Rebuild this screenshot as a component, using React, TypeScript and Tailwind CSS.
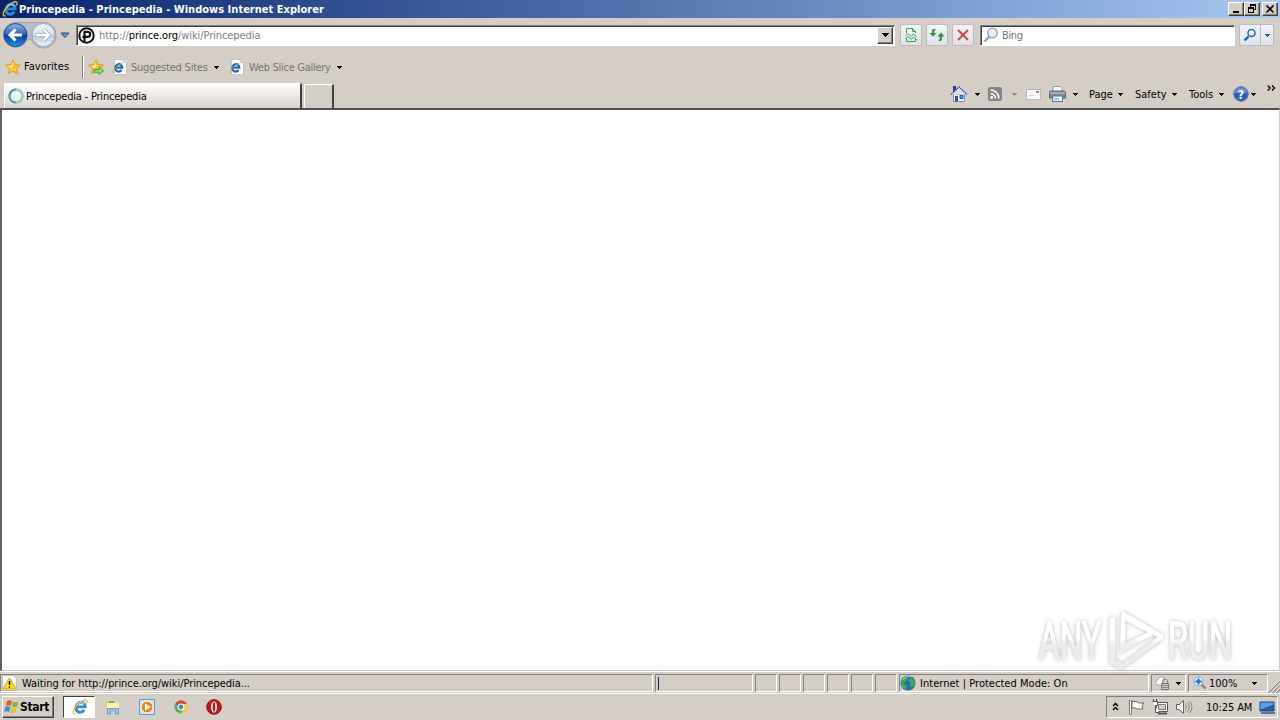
import React from 'react';

const Caret = ({ className = 'text-black' }: { className?: string }) => (
  <svg className={`shrink-0 ${className}`} width="5" height="3" viewBox="0 0 5 3" shapeRendering="crispEdges">
    <path d="M0 0h5v1H0zM1 1h3v1H1zM2 2h1v1H2z" fill="currentColor" />
  </svg>
);

const IeLogo = ({ size = 16 }: { size?: number }) => (
  <svg className="shrink-0" width={size} height={size} viewBox="0 0 16 16">
    <path d="M12.300 10.800A4.500 5.200 25 1 1 13.200 7.900H5.200" fill="none" stroke="#2a8ee0" strokeWidth="2.900" />
    <path d="M5 5.500a4.700 4.700 0 0 1 7.500-.3" fill="none" stroke="#8fdcfb" strokeWidth="1.200" />
    <path d="M3.600 14.600C0 16 .4 11.500 4.200 7 8 2.400 13.400-.4 14.800 1.300c.7.9.3 2-.3 3" fill="none" stroke="#f2c02c" strokeWidth="1.300" />
  </svg>
);

const PageIe = () => (
  <svg className="shrink-0" width="16" height="16" viewBox="0 0 16 16">
    <path d="M2.500.5h9l3 3v12h-12z" fill="#fff" stroke="#c3c3c3" />
    <path d="M11.500.5v3h3" fill="#e8e8e8" stroke="#c3c3c3" />
    <path d="M9.500 11A3.400 3.800 25 1 1 10.300 8.700H3.500" fill="none" stroke="#1769c5" strokeWidth="2.200" />
    <path d="M2 13.500C-1 14 3.500 6.500 10.500 4.500" fill="none" stroke="#d9a520" strokeWidth="1" />
  </svg>
);

const Star = ({ arrow = false }: { arrow?: boolean }) => (
  <svg className="shrink-0" width="16" height="16" viewBox="0 0 16 16">
    <path d="M8 .8l2.100 4.800 5.200.5-3.900 3.500 1.100 5.200L8 12.200l-4.500 2.600 1.100-5.200L.7 6.100l5.200-.5z" fill="#fdc531" stroke="#df9a22" />
    <path d="M8 2.800L6.600 6.400 3 6.900l2.600 2L8 7.500z" fill="#fff0a5" />
    {arrow && <path d="M6 10.500h5V8l4.500 3.900-4.500 3.700v-2.400H6z" fill="#8be37a" stroke="#3aa535" />}
  </svg>
);

const BackForward = () => (
  <svg className="shrink-0" width="56" height="28" viewBox="0 0 56 28">
    <defs>
      <linearGradient id="back" x1="0" y1="0" x2="0" y2="1">
        <stop offset="0" stopColor="#93b5e5" />
        <stop offset=".48" stopColor="#2b62b9" />
        <stop offset=".5" stopColor="#073a91" />
        <stop offset="1" stopColor="#2496e8" />
      </linearGradient>
      <linearGradient id="forward" x1="0" y1="0" x2="0" y2="1">
        <stop offset="0" stopColor="#f5f7fa" />
        <stop offset=".48" stopColor="#d7dfe9" />
        <stop offset=".5" stopColor="#b9c6d8" />
        <stop offset="1" stopColor="#eef5fc" />
      </linearGradient>
    </defs>
    <path d="M13.500 1.300h28a12.500 12.500 0 0 1 12.500 12.700A12.500 12.500 0 0 1 30 19.500q-2.500-2-5 0A12.500 12.500 0 1 1 13.500 1.300" fill="#b7bcc8" stroke="#8f95a3" strokeWidth=".7" />
    <circle cx="13.500" cy="14" r="11.500" fill="url(#back)" stroke="#1d458c" />
    <circle cx="41.500" cy="14" r="11.500" fill="url(#forward)" stroke="#99a6ba" />
    <path d="M20 14H8.500m5-5.500L8 14l5.500 5.500" fill="none" stroke="#fff" strokeWidth="3" />
    <path d="M34.500 14h12m-5-5.500l5.500 5.500-5.500 5.500" fill="none" stroke="#8f9db2" strokeWidth="3.600" />
    <path d="M34.500 14h12m-5-5.500l5.500 5.500-5.500 5.500" fill="none" stroke="#fff" strokeWidth="2.300" />
  </svg>
);

const WindowButton = ({ children }: { children: React.ReactNode }) => (
  <div className="flex h-[14px] w-4 items-center justify-center border border-t-white border-r-[#404040] border-b-[#404040] border-l-white bg-[#d5cec6] shadow-[inset_-1px_-1px_#808080]">
    {children}
  </div>
);

const ToolButton = ({ children }: { children: React.ReactNode }) => (
  <div className="flex h-[22px] w-[22px] shrink-0 items-center justify-center rounded-[2px] border border-[#b9bcc2] bg-linear-to-b from-[#f2f3f6] to-[#dfe2e8]">
    {children}
  </div>
);

const panel = 'flex h-[18px] shrink-0 items-center border border-t-[#808080] border-r-white border-b-white border-l-[#808080]';

const TitleBar = () => (
  <div className="flex h-[18px] items-center bg-linear-to-r from-[#0a246a] to-[#a6caf0] pr-[2px] pl-[2px]">
    <IeLogo />
    <span className="ml-px pt-px text-[11px] font-bold tracking-[0.02px] text-white">Princepedia - Princepedia - Windows Internet Explorer</span>
    <div className="ml-auto flex">
      <WindowButton>
        <svg width="12" height="10" shapeRendering="crispEdges"><path d="M3 7h6v2H3z" /></svg>
      </WindowButton>
      <WindowButton>
        <svg width="12" height="10" shapeRendering="crispEdges">
          <path d="M4 0h6v6H8V5h1V2H5v1H4zM2 3h6v6H2zM3 5v3h4V5z" fillRule="evenodd" />
        </svg>
      </WindowButton>
      <div className="ml-[2px]">
        <WindowButton>
          <svg width="12" height="10"><path d="M2.500 1.500l7 7m0-7l-7 7" stroke="#000" strokeWidth="1.600" /></svg>
        </WindowButton>
      </div>
    </div>
  </div>
);

const AddressBar = () => (
  <div className="flex h-[36px] items-center pb-[2px] pl-[2px]">
    <BackForward />
    <svg className="ml-[2px]" width="10" height="7" viewBox="0 0 10 7">
      <path d="M1 1h8L5 5.500z" fill="#55a1d7" stroke="#1d4f86" />
    </svg>
    <div className="ml-[6px] flex h-[21px] w-[819px] items-center border border-t-[#808080] border-r-white border-b-white border-l-[#808080] bg-white shadow-[inset_1px_1px_#404040]">
      <svg className="ml-px" width="17" height="17" viewBox="0 0 17 17">
        <circle cx="8.500" cy="8.500" r="7.200" fill="#fff" stroke="#111" strokeWidth="2" />
        <path d="M6.500 14.500V4.800h3.200a2.500 2.500 0 0 1 0 5H4.500" fill="none" stroke="#111" strokeWidth="2.200" />
      </svg>
      <span className="ml-[4px] pt-[2px] text-[11px] tracking-[-0.09px] text-[#808080]">
        http://<span className="text-black">prince.org</span>/wiki/Princepedia
      </span>
      <div className="mr-px ml-auto flex h-[17px] w-4 items-center justify-center border border-t-white border-r-[#404040] border-b-[#404040] border-l-white bg-[#d5cec6] shadow-[inset_-1px_-1px_#808080]">
        <svg width="7" height="4" shapeRendering="crispEdges"><path d="M0 0h7v1H0zM1 1h5v1H1zM2 2h3v1H2zM3 3h1v1H3z" /></svg>
      </div>
    </div>
    <div className="ml-[5px] flex gap-1">
      <ToolButton>
        <svg width="14" height="14" viewBox="0 0 14 14" fill="none" stroke="#41a046">
          <path d="M2.500 5V.5h6l3 3V5M8.500.5v3h3M2.500 10.500v3h9v-3" />
          <path d="M1.500 8L4 5.500l3 3L9.500 6l3 2.500M1.500 11L4 8.500l3 3L9.500 9l3 2.500" />
        </svg>
      </ToolButton>
      <ToolButton>
        <svg width="16" height="14" viewBox="0 0 16 14" fill="#319437">
          <path d="M7 1H4.200L3 2.500V5H.5L4 8.800 7.500 5H5.200V3z" />
          <path d="M9 13h2.800L13 11.500V8.500h2.500L12 4.500 8.500 8.500h2.300V11z" />
        </svg>
      </ToolButton>
      <ToolButton>
        <svg width="14" height="14"><path d="M2 2l10 10m0-10L2 12" stroke="#d3484c" strokeWidth="2" /></svg>
      </ToolButton>
    </div>
    <div className="ml-[6px] flex h-[21px] w-[255px] items-center border border-t-[#808080] border-r-white border-b-white border-l-[#808080] bg-white shadow-[inset_1px_1px_#404040]">
      <svg className="ml-[2px]" width="16" height="16" viewBox="0 0 16 16">
        <path d="M6.500 9.500L1.500 14.500" stroke="#929caa" strokeWidth="2.300" />
        <circle cx="9.500" cy="6" r="4.800" fill="#e2effa" stroke="#929caa" strokeWidth="1.300" />
      </svg>
      <span className="ml-[3px] pt-[2px] text-[11px] tracking-[-0.35px] text-[#727272]">Bing</span>
    </div>
    <div className="ml-[4px] flex h-[22px] w-[35px] rounded-[2px] border border-[#b9bcc2] bg-linear-to-b from-[#f2f4f8] to-[#dee4ee]">
      <div className="flex w-[21px] items-center justify-center border-r border-[#b9bcc2]">
        <svg width="14" height="14" viewBox="0 0 14 14">
          <path d="M5.500 8.500l-4 4" stroke="#1e59c5" strokeWidth="2.300" />
          <circle cx="8.500" cy="5" r="3.500" fill="#fff" stroke="#2865d3" strokeWidth="1.600" />
        </svg>
      </div>
      <div className="flex flex-1 items-center justify-center"><Caret className="text-[#1857a8]" /></div>
    </div>
  </div>
);

const FavoritesBar = () => (
  <div className="flex h-[26px] items-center pl-[5px] text-[11px]">
    <Star />
    <span className="ml-[3px] w-[58px] tracking-[0.06px]">Favorites</span>
    <div className="mr-[4px] h-[22px] w-[2px] border-r border-l border-r-white border-l-[#808080]" />
    <Star arrow />
    <div className="ml-[8px] flex items-center text-[#77746f]">
      <PageIe />
      <span className="ml-[3px] w-[83px] pt-px tracking-[-0.22px] whitespace-nowrap">Suggested Sites</span>
      <Caret />
    </div>
    <div className="ml-[10px] flex items-center text-[#77746f]">
      <PageIe />
      <span className="ml-[4px] w-[88px] pt-px tracking-[-0.28px] whitespace-nowrap">Web Slice Gallery</span>
      <Caret />
    </div>
  </div>
);

const CommandBar = () => (
  <div className="mb-[3px] ml-auto flex h-[22px] items-center pr-[4px] text-[11px]">
    <svg width="18" height="18" viewBox="0 0 18 18">
      <path d="M3 1h3v6H3z" fill="#293e93" />
      <path d="M3.500 9h11v7.500h-11z" fill="#f1f4fb" stroke="#7b91b8" />
      <path d="M1 9.500L9 2l8 7.500" fill="#d9e2f5" stroke="#314fa2" strokeWidth="1.300" strokeDasharray="1.500 .6" />
      <path d="M5 11h3v5.500H5z" fill="#28549c" />
      <path d="M10 10.500h3v3h-3z" fill="#42a6e1" stroke="#28549c" />
    </svg>
    <span className="ml-[7px] flex"><Caret /></span>
    <svg className="ml-[8px]" width="14" height="14" viewBox="0 0 14 14">
      <rect width="14" height="14" rx="2" fill="#858585" />
      <path d="M2.500 6.500a5 5 0 0 1 5 5M2.500 3a8.500 8.500 0 0 1 8.500 8.500" fill="none" stroke="#fff" strokeWidth="1.600" />
      <circle cx="3.700" cy="10.500" r="1.400" fill="#fff" />
    </svg>
    <span className="ml-[10px] flex"><Caret className="text-[#918d87]" /></span>
    <svg className="ml-[9px]" width="15" height="11" viewBox="0 0 15 11">
      <path d="M.5.5h14v10H.5z" fill="#fbfbfb" stroke="#b9b9c3" />
      <path d="M3 6.500h5" stroke="#cccce0" />
      <path d="M10 2h3v2h-3z" fill="#d57589" />
    </svg>
    <svg className="ml-[8px]" width="17" height="16" viewBox="0 0 17 16">
      <path d="M4 6V.5h7l2 2V6" fill="#f9fbfd" stroke="#8f98a5" />
      <path d="M.5 6.500Q.5 5 2 5h13q1.500 0 1.500 1.500V12H.5z" fill="#838992" stroke="#62666d" />
      <path d="M1 7h15" stroke="#c8cdd3" />
      <path d="M3.500 10h10v5.500h-10z" fill="#e8f5ff" stroke="#59738d" />
      <path d="M5 13h5" stroke="#3fa3e0" />
    </svg>
    <span className="ml-[7px] flex"><Caret /></span>
    <span className="ml-[11px] w-[29px] pt-px">Page</span><Caret />
    <span className="ml-[12px] w-[37px] pt-px">Safety</span><Caret />
    <span className="ml-[12px] w-[30px] pt-px">Tools</span><Caret />
    <svg className="ml-[9px]" width="16" height="16" viewBox="0 0 16 16">
      <circle cx="8" cy="8" r="7.300" fill="#2c5ec4" stroke="#737f9a" />
      <path d="M2 7a6 5.500 0 0 1 12 0" fill="#6a90dc" />
      <text x="8" y="12.500" textAnchor="middle" fontSize="12" fontWeight="bold" fill="#fff">?</text>
    </svg>
    <span className="ml-[2px] flex"><Caret /></span>
    <svg className="mb-[13px] ml-[11px]" width="9" height="6" viewBox="0 0 9 6" fill="none" stroke="#000" strokeWidth="1.300">
      <path d="M.7.5L3.200 3 .7 5.500M5 .5L7.500 3 5 5.500" />
    </svg>
  </div>
);

const TabRow = () => (
  <div className="flex h-[28px] items-end pl-[4px]">
    <div className="flex h-[25px] w-[298px] items-center border-t border-r-2 border-l border-t-white border-r-[#404040] border-l-white bg-linear-to-b from-white to-[#d9d3cb] pl-[3px]">
      <svg width="16" height="16" viewBox="0 0 16 16" fill="none">
        <circle cx="8" cy="8" r="6.300" stroke="#8fc8c2" strokeWidth="3" />
        <path d="M8 1.700A6.300 6.300 0 0 0 8 14.300" stroke="#43a79d" strokeWidth="2.500" />
        <circle cx="8" cy="8" r="5" fill="#eef7f5" stroke="#d5f3ee" />
      </svg>
      <span className="ml-[2px] pt-px text-[11px] tracking-[-0.2px]">Princepedia - Princepedia</span>
    </div>
    <div className="ml-[2px] h-[24px] w-[30px] border-t border-r-2 border-l border-t-white border-r-[#404040] border-l-white" />
    <CommandBar />
  </div>
);

const StatusBar = () => (
  <div className="flex h-[23px] items-center gap-[2px] border-t border-b border-white pt-px text-[11px]">
    <div className={`${panel} w-[653px] pl-px`}>
      <svg width="16" height="16" viewBox="0 0 16 16">
        <path d="M.5.500h11l3 3v12h-14z" fill="#f7f7f7" stroke="#bcbcbc" />
        <path d="M7.500 3L14 14H1z" fill="#ffe11c" stroke="#c99f13" strokeLinejoin="round" />
        <path d="M7.500 6v4M7.500 11.300v1.500" stroke="#000" strokeWidth="1.500" />
      </svg>
      <span className="ml-[4px] pt-px tracking-[-0.06px]">Waiting for http://prince.org/wiki/Princepedia...</span>
    </div>
    <div className={`${panel} w-[98px] pl-[2px]`}>
      <div className="h-[13px] w-px bg-[#0a246a]" />
    </div>
    {Array.from({ length: 6 }, (_, i) => <div key={i} className={`${panel} w-[22px]`} />)}
    <div className={`${panel} w-[250px]`}>
      <svg width="16" height="16" viewBox="0 0 16 16">
        <circle cx="8" cy="8" r="7.500" fill="#2868bd" />
        <path d="M3 2.500l4-1 1 3-3 2-1 3 3 1-1 4C2 13 1 10 1 7zM10 3l4 2 1 4-3 4-2-3 1-2-3-2z" fill="#42ac43" />
        <path d="M3 5a6 5 0 0 1 9-3" fill="none" stroke="#9bd7f3" />
      </svg>
      <span className="ml-[4px] pt-px tracking-[0.03px]">Internet | Protected Mode: On</span>
    </div>
    <div className={`${panel} w-[35px] pl-[3px]`}>
      <svg width="16" height="16" viewBox="0 0 16 16">
        <path d="M1 10a7 7 0 0 1 8-8v4L6 10z" fill="#fff" stroke="#a4a4a4" />
        <path d="M7.500 8V6.500a2.500 2.500 0 0 1 5 0V8" fill="none" stroke="#777" />
        <path d="M6.500 8.500h7v6h-7z" fill="#c9c9c9" stroke="#777" />
        <path d="M7 10.500h6M7 12.500h6" stroke="#888" />
      </svg>
      <span className="ml-[5px] flex"><Caret /></span>
    </div>
    <div className={`${panel} w-[80px] pl-[4px]`}>
      <svg width="14" height="14" viewBox="0 0 14 14">
        <path d="M8 8l4.500 4.500" stroke="#9a7758" strokeWidth="2.200" />
        <circle cx="5.500" cy="5.500" r="4.500" fill="#e5f2fe" stroke="#82aad4" />
        <path d="M5.500 2.500v6M2.500 5.500h6" stroke="#1670cd" strokeWidth="2" />
      </svg>
      <span className="ml-[2px] w-[43px] pt-px">100%</span>
      <Caret />
    </div>
    <svg className="-ml-[2px] self-end" width="12" height="13" viewBox="0 0 12 13" strokeWidth="1.500">
      <path d="M0 13L12 1M4 13l8-8M8 13l4-4" stroke="#888" />
      <path d="M-1 13L12 0M3 13l9-9M7 13l5-5" stroke="#fff" strokeWidth=".7" />
    </svg>
  </div>
);

const Taskbar = () => (
  <div className="flex h-[26px] items-center pl-[2px] text-[11px]">
    <div className="flex h-[22px] w-[52px] items-center border border-t-white border-r-[#404040] border-b-[#404040] border-l-white pl-px shadow-[inset_-1px_-1px_#808080]">
      <svg width="16" height="16" viewBox="0 0 16 16">
        <path d="M3 2q2.500-1.500 5 0L6.700 7q-2.500-1.300-5 0z" fill="#e65c29" />
        <path d="M9 2.500q2.500 1.300 5.500 0L13 7.500q-2.500 1.300-5.200 0z" fill="#7eb83c" />
        <path d="M1.400 8q2.500-1.300 5 0L5 13q-2.500-1.300-5 0z" fill="#3a8ed6" />
        <path d="M7.500 8.500q2.500 1.300 5.200 0L11.400 13.500q-2.500 1.300-5.200 0z" fill="#f3bf2d" />
      </svg>
      <span className="text-[12px] font-bold tracking-[-0.3px]">Start</span>
    </div>
    <div className="ml-[9px] flex h-[22px] w-[32px] items-center justify-center border border-t-[#404040] border-r-white border-b-white border-l-[#404040] bg-white pl-[2px]">
      <IeLogo />
    </div>
    <svg className="ml-[10px]" width="16" height="16" viewBox="0 0 16 16">
      <path d="M1 2h6l1 2h6v9H1z" fill="#efc65a" />
      <path d="M2 4h12v9H2z" fill="#fff0ad" />
      <path d="M4 2h5v2H4z" fill="#5db86a" />
      <path d="M2.500 15V9.500h11V15h-3v-3h-5v3z" fill="#91c9ed" stroke="#609fca" />
    </svg>
    <svg className="ml-[18px]" width="16" height="16" viewBox="0 0 16 16">
      <path d="M.5.500h15v15H.5z" fill="#c7e2f5" stroke="#5a9dcc" />
      <circle cx="8" cy="8" r="6" fill="#ef8416" stroke="#fff" />
      <path d="M6 4.500L12 8l-6 3.500z" fill="#fff" />
    </svg>
    <svg className="ml-[19px]" width="14" height="14" viewBox="0 0 14 14">
      <circle cx="7" cy="7" r="6.500" fill="#4eae50" />
      <path d="M7 7L1.300 3.800A6.500 6.500 0 0 1 12.800 4H7z" fill="#df4637" />
      <path d="M7 4h5.800A6.500 6.500 0 0 1 6.500 13.500L10 8z" fill="#f9cb36" />
      <circle cx="7" cy="7" r="3" fill="#4385e8" stroke="#fff" strokeWidth="1.200" />
    </svg>
    <svg className="ml-[18px]" width="16" height="16" viewBox="0 0 16 16">
      <circle cx="8" cy="8" r="7.300" fill="#c4181d" stroke="#8a1015" />
      <ellipse cx="8" cy="8" rx="3" ry="5.500" fill="#fff" />
      <ellipse cx="8" cy="8" rx="1.300" ry="4.700" fill="#b2181c" />
    </svg>
    <div className="mr-[2px] ml-auto flex h-[22px] w-[172px] items-center border border-t-[#808080] border-r-white border-b-white border-l-[#808080] pl-[5px]">
      <svg className="mb-[2px]" width="7" height="9" viewBox="0 0 7 9" fill="none" stroke="#000" strokeWidth="1.500">
        <path d="M1 4l2.500-2.500L6 4M1 8l2.500-2.500L6 8" />
      </svg>
      <svg className="ml-[9px]" width="17" height="16" viewBox="0 0 17 16">
        <path d="M2.500 1v14.500" stroke="#666" strokeWidth="2.500" />
        <path d="M2.500 1.500v13" stroke="#fff" />
        <path d="M4 2.500h5l1.500 1.500h5.500l-2 3 1 3H9L7.500 9H4z" fill="#fff" stroke="#666" />
      </svg>
      <svg className="ml-[7px]" width="16" height="16" viewBox="0 0 16 16">
        <path d="M4.500 3.500h11v9h-11z" fill="#fff" stroke="#555" />
        <path d="M6.500 5.500h7v5h-7z" fill="#d5cec6" stroke="#777" />
        <path d="M6 14.500h9" stroke="#555" strokeWidth="2" />
        <path d="M.5 2.500h5v4H3.500v7H7" fill="#fff" stroke="#555" />
        <path d="M1.500 0v3M4.500 0v3" stroke="#555" />
      </svg>
      <svg className="ml-[8px]" width="17" height="16" viewBox="0 0 17 16" fill="none" stroke="#666">
        <path d="M.5 5.500h3l4-4v13l-4-4h-3z" fill="#fff" />
        <path d="M9.500 5.500q2 2.500 0 5M11.500 3.500q3.500 4.500 0 9M13.500 2q5 6 0 12" strokeOpacity=".7" />
      </svg>
      <span className="ml-[13px] w-[53px] pt-px tracking-[-0.08px] whitespace-nowrap">10:25 AM</span>
      <svg width="17" height="13" viewBox="0 0 17 13">
        <path d="M1 1h14v9H1z" fill="#1d5fb4" stroke="#214071" />
        <path d="M1.500 1.500h13v2l-13 5z" fill="#5aa0e0" />
        <path d="M2 12h14" stroke="#385884" strokeWidth="1.500" />
      </svg>
    </div>
  </div>
);

const Watermark = () => (
  <svg className="pointer-events-none absolute top-[602px] left-[1030px]" width="240" height="74" viewBox="0 0 240 74" fontFamily="Roboto" fontSize="51">
    <defs>
      <linearGradient id="mark" gradientUnits="userSpaceOnUse" x1="0" y1="36" x2="0" y2="42">
        <stop offset="0" stopColor="#fff" />
        <stop offset="1" stopColor="#ededed" />
      </linearGradient>
    </defs>
    <g className="drop-shadow-[0_0_2px_rgba(0,0,0,0.28)]" fill="url(#mark)" stroke="url(#mark)" strokeWidth="1.5">
      <text x="9" y="57" textLength="62" lengthAdjust="spacingAndGlyphs">ANY</text>
      <text x="138" y="57" textLength="64" lengthAdjust="spacingAndGlyphs">RUN</text>
      <path d="M92 9l41 24v4L91 67l-11-6V17l5-3v43l7 5 36-27-33-17v24l24-12 3 3-32 18z" fillRule="evenodd" strokeWidth=".8" />
    </g>
  </svg>
);

export default function App() {
  return (
    <div className="relative flex h-[720px] w-[1280px] flex-col overflow-hidden bg-[#d5cec6] font-['DejaVu_Sans_Condensed','DejaVu_Sans',sans-serif] leading-[14px] text-black">
      <TitleBar />
      <AddressBar />
      <FavoritesBar />
      <TabRow />
      <div className="h-[563px] border-t-2 border-r border-b border-l-2 border-t-[#505050] border-r-[#d5cec6] border-b-[#c8c2ba] border-l-[#606060] bg-white" />
      <StatusBar />
      <Taskbar />
      <Watermark />
    </div>
  );
}
